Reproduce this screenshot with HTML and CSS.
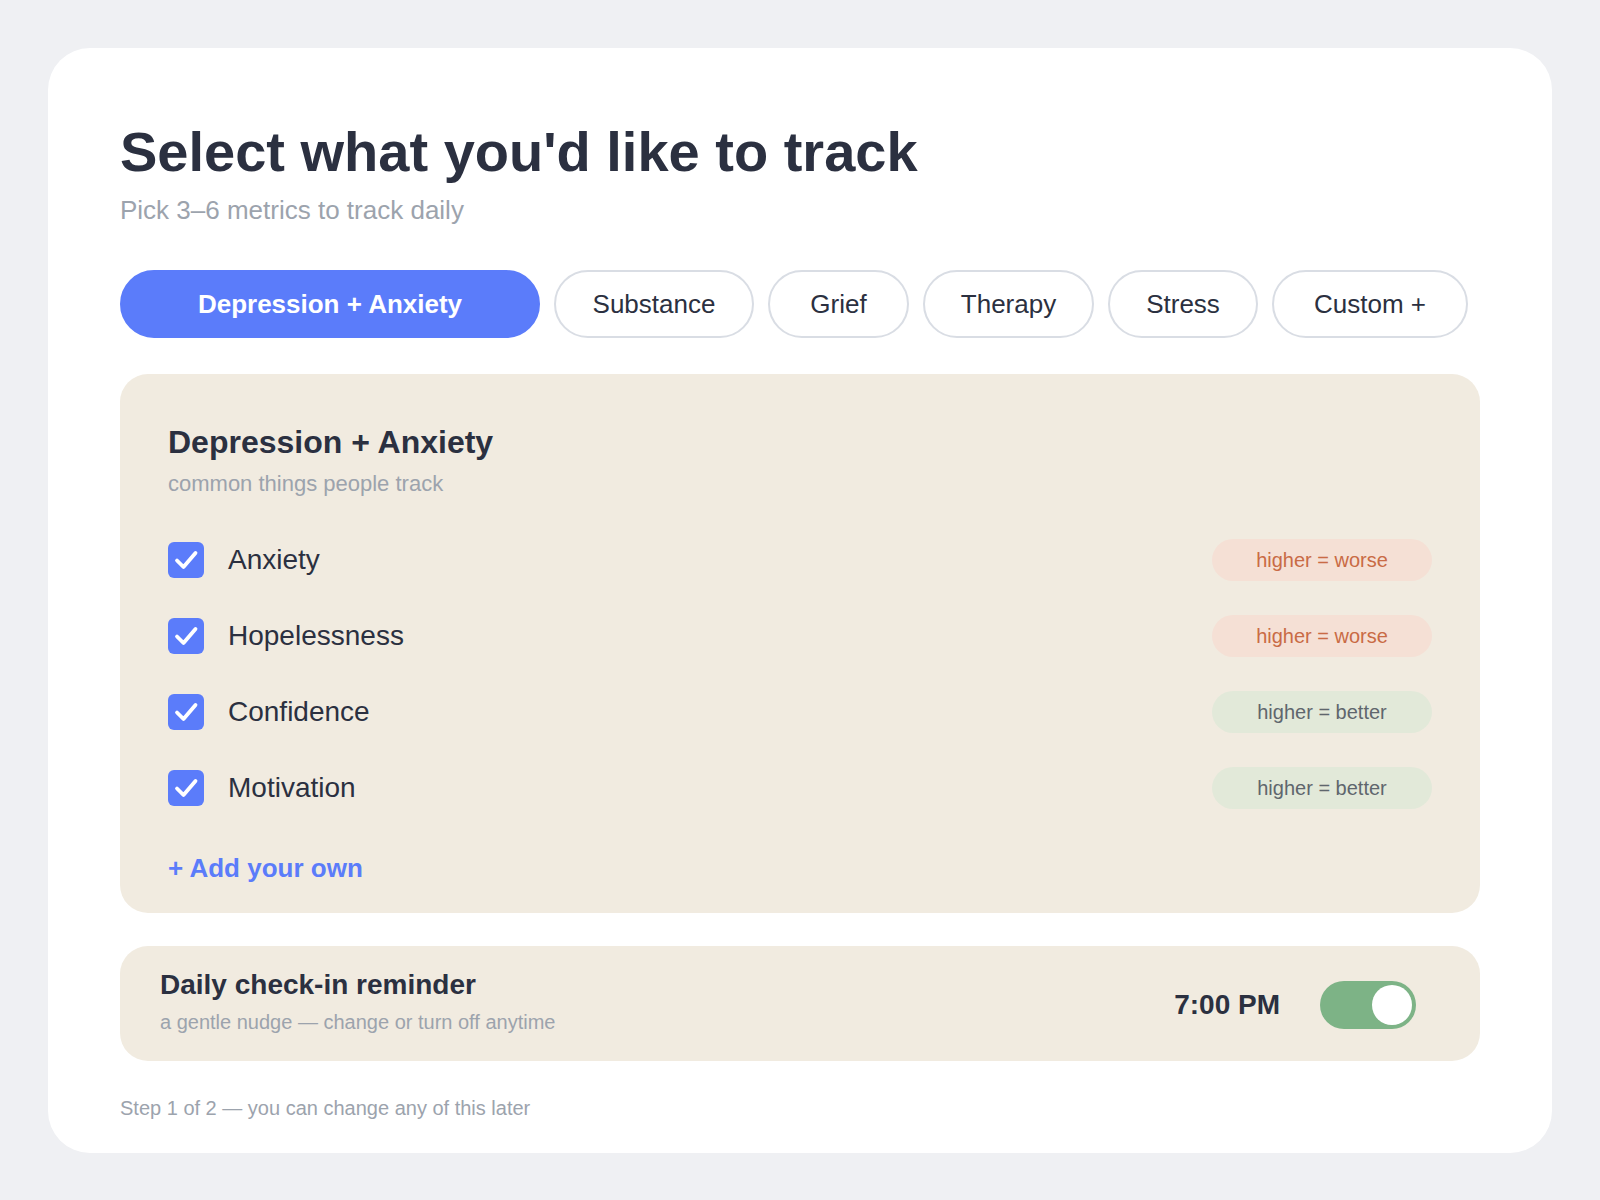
FILE: index.html
```html
<!DOCTYPE html>
<html lang="en">
<head>
    <meta charset="UTF-8">
    <meta name="viewport" content="width=device-width, initial-scale=1.0">
    <title>Select what to track</title>
    <link rel="stylesheet" href="styles.css">
</head>
<body>
    <div class="card">
        <h1 class="title">Select what you'd like to track</h1>
        <p class="subtitle">Pick 3–6 metrics to track daily</p>

        <div class="tabs">
            <button class="tab active">Depression + Anxiety</button>
            <button class="tab tab-substance">Substance</button>
            <button class="tab tab-grief">Grief</button>
            <button class="tab tab-therapy">Therapy</button>
            <button class="tab tab-stress">Stress</button>
            <button class="tab tab-custom">Custom +</button>
        </div>

        <div class="panel">
            <h2 class="panel-title">Depression + Anxiety</h2>
            <p class="panel-sub">common things people track</p>

            <div class="metrics">
                <div class="metric">
                    <span class="check"><svg width="36" height="36" viewBox="0 0 36 36"><path d="M9 18.5l6.5 6.5L27.5 11" fill="none" stroke="#fff" stroke-width="3.8" stroke-linecap="round" stroke-linejoin="round"/></svg></span>
                    <span class="metric-name">Anxiety</span>
                    <span class="badge worse">higher = worse</span>
                </div>
                <div class="metric">
                    <span class="check"><svg width="36" height="36" viewBox="0 0 36 36"><path d="M9 18.5l6.5 6.5L27.5 11" fill="none" stroke="#fff" stroke-width="3.8" stroke-linecap="round" stroke-linejoin="round"/></svg></span>
                    <span class="metric-name">Hopelessness</span>
                    <span class="badge worse">higher = worse</span>
                </div>
                <div class="metric">
                    <span class="check"><svg width="36" height="36" viewBox="0 0 36 36"><path d="M9 18.5l6.5 6.5L27.5 11" fill="none" stroke="#fff" stroke-width="3.8" stroke-linecap="round" stroke-linejoin="round"/></svg></span>
                    <span class="metric-name">Confidence</span>
                    <span class="badge better">higher = better</span>
                </div>
                <div class="metric">
                    <span class="check"><svg width="36" height="36" viewBox="0 0 36 36"><path d="M9 18.5l6.5 6.5L27.5 11" fill="none" stroke="#fff" stroke-width="3.8" stroke-linecap="round" stroke-linejoin="round"/></svg></span>
                    <span class="metric-name">Motivation</span>
                    <span class="badge better">higher = better</span>
                </div>
            </div>

            <a class="add-own" href="#">+ Add your own</a>
        </div>

        <div class="reminder">
            <div class="reminder-text">
                <div class="reminder-title">Daily check-in reminder</div>
                <div class="reminder-sub">a gentle nudge — change or turn off anytime</div>
            </div>
            <div class="reminder-time">7:00 PM</div>
            <div class="toggle"><span class="knob"></span></div>
        </div>

        <p class="footer">Step 1 of 2 — you can change any of this later</p>
    </div>
</body>
</html>
```

FILE: styles.css
```css
body {
    margin: 0;
    padding: 48px;
    background: #eff0f3;
    font-family: "Liberation Sans", Arial, sans-serif;
    color: #2b3040;
}
.card {
    background: #fff;
    border-radius: 42px;
    padding: 72px 72px 32px;
}
.title {
    font-size: 56px;
    line-height: 64px;
    font-weight: bold;
    margin: 0;
}
.subtitle {
    font-size: 26px;
    line-height: 32px;
    color: #9ca3ad;
    margin: 10px 0 0;
}
.tabs {
    display: flex;
    gap: 14px;
    margin-top: 44px;
}
.tab {
    font-family: inherit;
    font-size: 26px;
    color: #2b3040;
    background: #fff;
    border: 2px solid #d9dde4;
    border-radius: 34px;
    height: 68px;
    padding: 0;
}
.tab.active {
    width: 420px;
    background: #5b7cfa;
    border-color: #5b7cfa;
    color: #fff;
    font-weight: bold;
}
.tab-substance { width: 200px; }
.tab-grief { width: 141px; }
.tab-therapy { width: 171px; }
.tab-stress { width: 150px; }
.tab-custom { width: 196px; }
.panel {
    background: #f1ebe0;
    border-radius: 28px;
    margin-top: 36px;
    padding: 48px 48px 30px;
}
.panel-title {
    font-size: 32px;
    line-height: 40px;
    margin: 0;
}
.panel-sub {
    font-size: 22px;
    line-height: 30px;
    color: #9ca3ad;
    margin: 7px 0 0;
}
.metrics {
    margin-top: 23px;
}
.metric {
    display: flex;
    align-items: center;
    height: 76px;
}
.check {
    width: 36px;
    height: 36px;
    border-radius: 6px;
    background: #5b7cfa;
    display: flex;
}
.metric-name {
    font-size: 28px;
    margin-left: 24px;
    flex: 1;
}
.badge {
    width: 220px;
    height: 42px;
    line-height: 42px;
    border-radius: 21px;
    text-align: center;
    font-size: 20px;
}
.badge.worse {
    background: #f5e0d5;
    color: #c96b45;
}
.badge.better {
    background: #e2e9d9;
    color: #5f666d;
}
.add-own {
    display: block;
    margin-top: 27px;
    font-size: 26px;
    line-height: 30px;
    font-weight: bold;
    color: #5b7cfa;
    text-decoration: none;
}
.reminder {
    background: #f1ebe0;
    border-radius: 28px;
    margin-top: 33px;
    padding: 22px 64px 26px 40px;
    display: flex;
    align-items: center;
}
.reminder-text {
    flex: 1;
}
.reminder-title {
    font-size: 28px;
    line-height: 34px;
    font-weight: bold;
}
.reminder-sub {
    font-size: 20px;
    line-height: 26px;
    color: #9ca3ad;
    margin-top: 7px;
}
.reminder-time {
    font-size: 28px;
    font-weight: bold;
    margin: 6px 40px 0 0;
}
.toggle {
    width: 96px;
    height: 48px;
    border-radius: 24px;
    background: #7db386;
    display: flex;
    justify-content: flex-end;
    align-items: center;
    padding: 0 4px;
    margin-top: 6px;
    box-sizing: border-box;
}
.knob {
    width: 40px;
    height: 40px;
    border-radius: 50%;
    background: #fff;
}
.footer {
    font-size: 20px;
    line-height: 26px;
    color: #9ca3ad;
    margin: 34px 0 0;
}
```
